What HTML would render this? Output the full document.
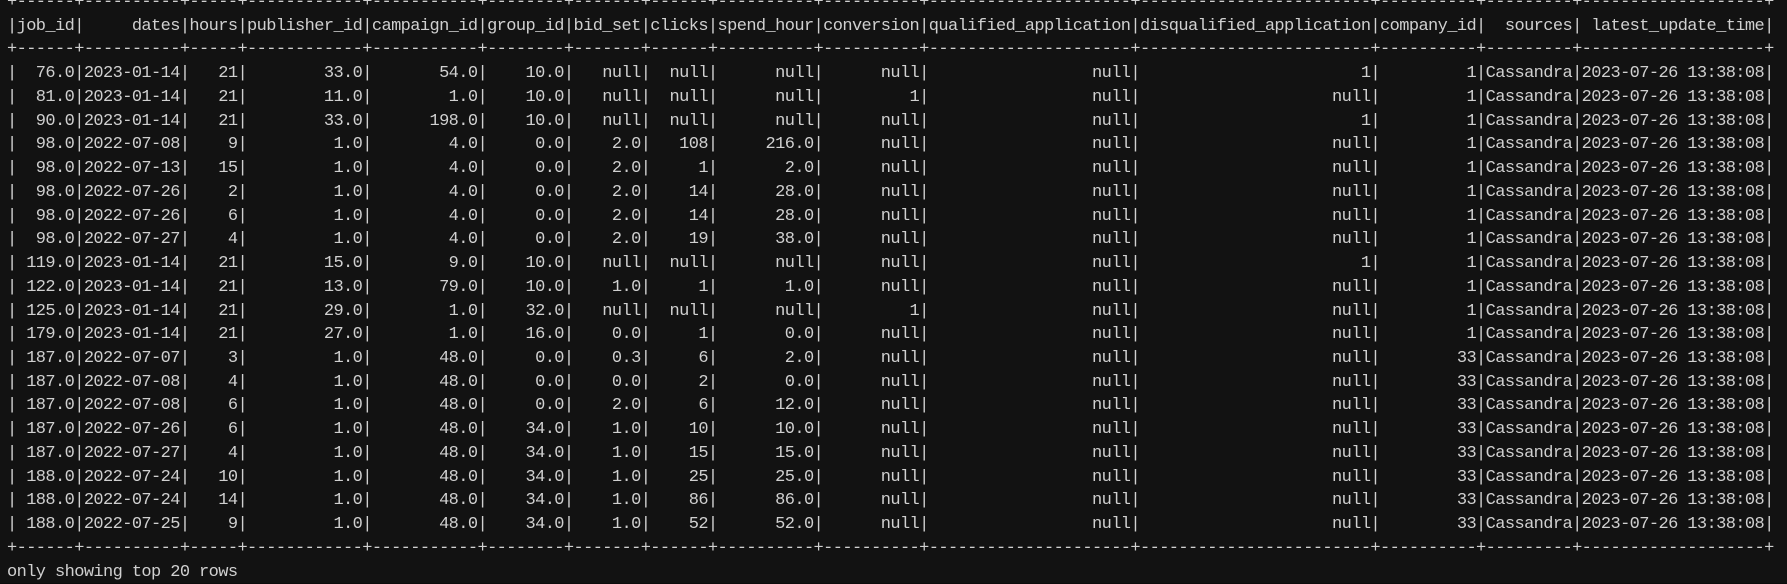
<!DOCTYPE html>
<html><head><meta charset="utf-8"><style>
html,body{margin:0;padding:0;background:#0c0c0c;}
body{width:1787px;height:583px;overflow:hidden;background:#121212;}
pre{position:absolute;left:7px;top:-9px;margin:0;font-family:"Liberation Mono",monospace;font-size:17px;letter-spacing:-0.6px;line-height:23.74px;color:#d0d0d0;white-space:pre;}
</style></head><body><pre>+------+----------+-----+------------+-----------+--------+-------+------+----------+----------+---------------------+------------------------+----------+---------+-------------------+
|job_id|     dates|hours|publisher_id|campaign_id|group_id|bid_set|clicks|spend_hour|conversion|qualified_application|disqualified_application|company_id|  sources| latest_update_time|
+------+----------+-----+------------+-----------+--------+-------+------+----------+----------+---------------------+------------------------+----------+---------+-------------------+
|  76.0|2023-01-14|   21|        33.0|       54.0|    10.0|   null|  null|      null|      null|                 null|                       1|         1|Cassandra|2023-07-26 13:38:08|
|  81.0|2023-01-14|   21|        11.0|        1.0|    10.0|   null|  null|      null|         1|                 null|                    null|         1|Cassandra|2023-07-26 13:38:08|
|  90.0|2023-01-14|   21|        33.0|      198.0|    10.0|   null|  null|      null|      null|                 null|                       1|         1|Cassandra|2023-07-26 13:38:08|
|  98.0|2022-07-08|    9|         1.0|        4.0|     0.0|    2.0|   108|     216.0|      null|                 null|                    null|         1|Cassandra|2023-07-26 13:38:08|
|  98.0|2022-07-13|   15|         1.0|        4.0|     0.0|    2.0|     1|       2.0|      null|                 null|                    null|         1|Cassandra|2023-07-26 13:38:08|
|  98.0|2022-07-26|    2|         1.0|        4.0|     0.0|    2.0|    14|      28.0|      null|                 null|                    null|         1|Cassandra|2023-07-26 13:38:08|
|  98.0|2022-07-26|    6|         1.0|        4.0|     0.0|    2.0|    14|      28.0|      null|                 null|                    null|         1|Cassandra|2023-07-26 13:38:08|
|  98.0|2022-07-27|    4|         1.0|        4.0|     0.0|    2.0|    19|      38.0|      null|                 null|                    null|         1|Cassandra|2023-07-26 13:38:08|
| 119.0|2023-01-14|   21|        15.0|        9.0|    10.0|   null|  null|      null|      null|                 null|                       1|         1|Cassandra|2023-07-26 13:38:08|
| 122.0|2023-01-14|   21|        13.0|       79.0|    10.0|    1.0|     1|       1.0|      null|                 null|                    null|         1|Cassandra|2023-07-26 13:38:08|
| 125.0|2023-01-14|   21|        29.0|        1.0|    32.0|   null|  null|      null|         1|                 null|                    null|         1|Cassandra|2023-07-26 13:38:08|
| 179.0|2023-01-14|   21|        27.0|        1.0|    16.0|    0.0|     1|       0.0|      null|                 null|                    null|         1|Cassandra|2023-07-26 13:38:08|
| 187.0|2022-07-07|    3|         1.0|       48.0|     0.0|    0.3|     6|       2.0|      null|                 null|                    null|        33|Cassandra|2023-07-26 13:38:08|
| 187.0|2022-07-08|    4|         1.0|       48.0|     0.0|    0.0|     2|       0.0|      null|                 null|                    null|        33|Cassandra|2023-07-26 13:38:08|
| 187.0|2022-07-08|    6|         1.0|       48.0|     0.0|    2.0|     6|      12.0|      null|                 null|                    null|        33|Cassandra|2023-07-26 13:38:08|
| 187.0|2022-07-26|    6|         1.0|       48.0|    34.0|    1.0|    10|      10.0|      null|                 null|                    null|        33|Cassandra|2023-07-26 13:38:08|
| 187.0|2022-07-27|    4|         1.0|       48.0|    34.0|    1.0|    15|      15.0|      null|                 null|                    null|        33|Cassandra|2023-07-26 13:38:08|
| 188.0|2022-07-24|   10|         1.0|       48.0|    34.0|    1.0|    25|      25.0|      null|                 null|                    null|        33|Cassandra|2023-07-26 13:38:08|
| 188.0|2022-07-24|   14|         1.0|       48.0|    34.0|    1.0|    86|      86.0|      null|                 null|                    null|        33|Cassandra|2023-07-26 13:38:08|
| 188.0|2022-07-25|    9|         1.0|       48.0|    34.0|    1.0|    52|      52.0|      null|                 null|                    null|        33|Cassandra|2023-07-26 13:38:08|
+------+----------+-----+------------+-----------+--------+-------+------+----------+----------+---------------------+------------------------+----------+---------+-------------------+
only showing top 20 rows</pre></body></html>
